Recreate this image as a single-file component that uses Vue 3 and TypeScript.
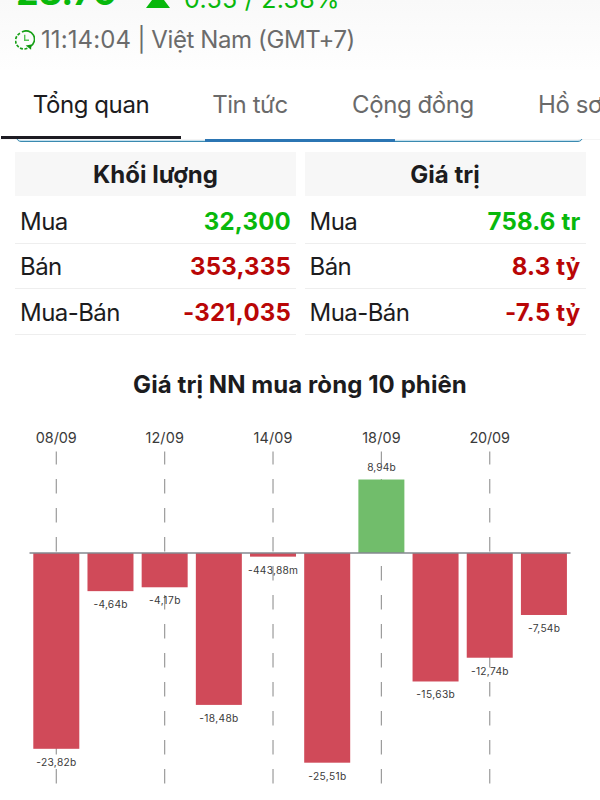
<script setup lang="ts">
interface Row {
  label: string
  value: string
  up: boolean
}

interface Panel {
  title: string
  rows: Row[]
}

interface Session {
  value: number
  label: string
  width: number
  date?: string
  dateWidth?: number
}

const tabs: { id: string; name: string; active: boolean }[] = [
  { id: 'overview', name: 'Tổng quan', active: true },
  { id: 'news', name: 'Tin tức', active: false },
  { id: 'community', name: 'Cộng đồng', active: false },
  { id: 'profile', name: 'Hồ sơ', active: false },
]

const panels: Panel[] = [
  {
    title: 'Khối lượng',
    rows: [
      { label: 'Mua', value: '32,300', up: true },
      { label: 'Bán', value: '353,335', up: false },
      { label: 'Mua-Bán', value: '-321,035', up: false },
    ],
  },
  {
    title: 'Giá trị',
    rows: [
      { label: 'Mua', value: '758.6 tr', up: true },
      { label: 'Bán', value: '8.3 tỷ', up: false },
      { label: 'Mua-Bán', value: '-7.5 tỷ', up: false },
    ],
  },
]

const sessions: Session[] = [
  { value: -23.82, label: '-23,82b', width: 40, date: '08/09', dateWidth: 41 },
  { value: -4.64, label: '-4,64b', width: 34 },
  { value: -4.17, label: '-4,17b', width: 31.5, date: '12/09', dateWidth: 38.5 },
  { value: -18.48, label: '-18,48b', width: 39 },
  { value: -0.44388, label: '-443,88m', width: 50, date: '14/09', dateWidth: 39 },
  { value: -25.51, label: '-25,51b', width: 38 },
  { value: 8.94, label: '8,94b', width: 28.5, date: '18/09', dateWidth: 38.5 },
  { value: -15.63, label: '-15,63b', width: 38.5 },
  { value: -12.74, label: '-12,74b', width: 37.5, date: '20/09', dateWidth: 40.5 },
  { value: -7.54, label: '-7,54b', width: 32 },
]

// Chart geometry, in the units of the SVG viewBox
const zero = 133
const scale = 8.22
const step = 54.18
const barWidth = 46

const bars = sessions.map((s, i) => {
  const cx = 56.3 + i * step
  const size = Math.abs(s.value) * scale
  const top = s.value > 0 ? zero - size : zero
  return {
    ...s,
    cx,
    x: cx - barWidth / 2,
    top,
    size,
    labelY: s.value > 0 ? top - 8.7 : zero + size + 17,
  }
})
</script>

<template>
  <main class="screen">
    <header class="quote">
      <div class="price-line">
        <strong class="price">23.70</strong>
        <svg class="arrow" viewBox="0 0 24 16"><path d="M12 0 24 16H0Z" /></svg>
        <span class="change">0.55 / 2.38%</span>
      </div>
      <div class="time-line">
        <svg class="clock" viewBox="0 0 20 20">
          <path class="ring" d="M7 1.9A8.4 8.4 0 0 1 15.2 16.6" />
          <path class="ring dots" d="M5 3.2A8.4 8.4 0 0 0 13 18" />
          <path class="hands" d="M9.7 4.8V10.3H14" />
          <path class="tip" d="M10.7 15.6 16.4 14.4 16.1 19.7Z" />
        </svg>
        <span class="time"><span class="digits">11:14:04</span> | Việt Nam (GMT+7)</span>
      </div>
    </header>

    <nav class="tabs">
      <div v-for="t in tabs" :key="t.id" class="tab" :class="[t.id, { active: t.active }]">
        <span>{{ t.name }}</span>
      </div>
    </nav>

    <div class="segment-clip">
      <div class="segment"><div class="segment-active"></div></div>
    </div>

    <section class="panels">
      <div v-for="p in panels" :key="p.title" class="panel">
        <h2>{{ p.title }}</h2>
        <div v-for="r in p.rows" :key="r.label" class="row">
          <span class="label">{{ r.label }}</span>
          <b :class="r.up ? 'up' : 'down'">{{ r.value }}</b>
        </div>
      </div>
    </section>

    <h3 class="chart-title">Giá trị NN mua ròng 10 phiên</h3>

    <svg class="chart" viewBox="0 0 600 380">
      <template v-for="b in bars" :key="b.label">
        <line v-if="b.date" class="guide" :x1="b.cx" :x2="b.cx" y1="363.6" y2="31.6" />
      </template>
      <rect
        v-for="b in bars"
        :key="b.label"
        :class="b.value > 0 ? 'gain' : 'loss'"
        :x="b.x"
        :y="b.top"
        :width="barWidth"
        :height="b.size"
      />
      <line class="axis" x1="29.5" x2="570.5" :y1="zero" :y2="zero" />
      <template v-for="b in bars" :key="b.label">
        <text v-if="b.date" class="date" :x="b.cx" y="22.6" :textLength="b.dateWidth">{{ b.date }}</text>
        <text class="value" :x="b.cx" :y="b.labelY" :textLength="b.width">{{ b.label }}</text>
      </template>
    </svg>
  </main>
</template>

<style>
body {
  margin: 0;
  background: #fff;
}
</style>

<style scoped>
.screen {
  width: 600px;
  height: 800px;
  overflow: hidden;
  background: #fff;
  color: #1c1c1e;
  font-family: Inter, 'Liberation Sans', sans-serif;
  font-size: 24px;
  line-height: 30px;
}
.quote {
  height: 70px;
  overflow: hidden;
  background: linear-gradient(#f9f9f9, #fefefe);
}
.price-line {
  display: flex;
  height: 30px;
  margin-top: -20px;
  padding-left: 16px;
  color: #08b80c;
}
.price {
  width: 130px;
  margin-top: -3px;
  font-size: 36px;
}
.arrow {
  width: 24px;
  height: 16px;
  margin-top: 12px;
  fill: #08b80c;
}
.change {
  margin: 4px 0 0 14px;
  font-size: 25px;
  letter-spacing: 0.25px;
  white-space: nowrap;
}
.time-line {
  display: flex;
  align-items: center;
  padding: 15px 0 0 15px;
  color: #6b6b6b;
}
.clock {
  width: 20px;
  height: 20px;
  margin-right: 6px;
  fill: none;
}
.ring {
  stroke: #18a018;
  stroke-width: 1.7;
}
.dots {
  stroke-dasharray: 3 1.5;
}
.hands {
  stroke: #55c455;
  stroke-width: 1.4;
}
.tip {
  fill: #0d960d;
}
.time {
  letter-spacing: -0.4px;
  white-space: nowrap;
}
.digits {
  letter-spacing: 0.1px;
}
.tabs {
  display: flex;
  height: 69px;
  overflow: hidden;
  color: #6a6a6a;
  border-bottom: 1px solid #f5f5f5;
}
.tab {
  flex: none;
  box-sizing: border-box;
  height: 69px;
  padding-top: 20px;
  text-align: center;
  letter-spacing: -0.42px;
  white-space: nowrap;
}
.overview {
  width: 180px;
  margin-left: 1px;
  color: #1c1c1e;
  border-bottom: 3px solid #1d1b22;
}
.news {
  width: 138px;
}
.community {
  width: 188px;
}
.profile {
  padding-left: 31px;
}
.segment-clip {
  display: flex;
  align-items: flex-end;
  height: 3px;
  margin-top: -1px;
  overflow: hidden;
  padding: 0 17px 0 16px;
}
.segment {
  box-sizing: border-box;
  flex: 1;
  height: 40px;
  border: 1px solid #3a8ab0;
  border-radius: 5px;
  box-shadow: inset 0 -1px 0 #c4e0ee;
  display: flex;
  align-items: flex-end;
}
.segment-active {
  width: 190px;
  height: 3px;
  margin: 0 0 -1px 188px;
  background: #2b75b3;
}
.panels {
  display: grid;
  grid-template-columns: 281px 281px;
  gap: 8.5px;
  padding: 10px 15px 0;
}
.panel h2 {
  height: 44px;
  margin: 0 0 2px;
  background: #f7f7f7;
  font-size: 24px;
  line-height: 45px;
  font-weight: 700;
  text-align: center;
}
.row {
  display: flex;
  box-sizing: border-box;
  height: 45.5px;
  padding: 3px 5px 0;
  justify-content: space-between;
  align-items: center;
  border-bottom: 1px solid #eee;
}
.label {
  letter-spacing: -0.55px;
}
.row b {
  letter-spacing: 0.2px;
}
.up {
  color: #08b80c;
}
.down {
  color: #b90606;
}
.chart-title {
  margin: 38px 0 0;
  height: 47px;
  line-height: 24px;
  font-size: 24px;
  font-weight: 700;
  letter-spacing: 0.08px;
  text-align: center;
}
.chart {
  display: block;
  width: 600px;
  height: 380px;
}
.guide {
  stroke: #9b9b9b;
  stroke-width: 1.2;
  stroke-dasharray: 14.5 14.5;
}
.axis {
  stroke: #85898f;
  stroke-width: 1.3;
}
.gain {
  fill: #71bd6b;
}
.loss {
  fill: #d04a59;
}
.date,
.value {
  text-anchor: middle;
  fill: #3a3a3a;
}
.date {
  font-size: 14.4px;
}
.value {
  font-size: 10.2px;
}
</style>
